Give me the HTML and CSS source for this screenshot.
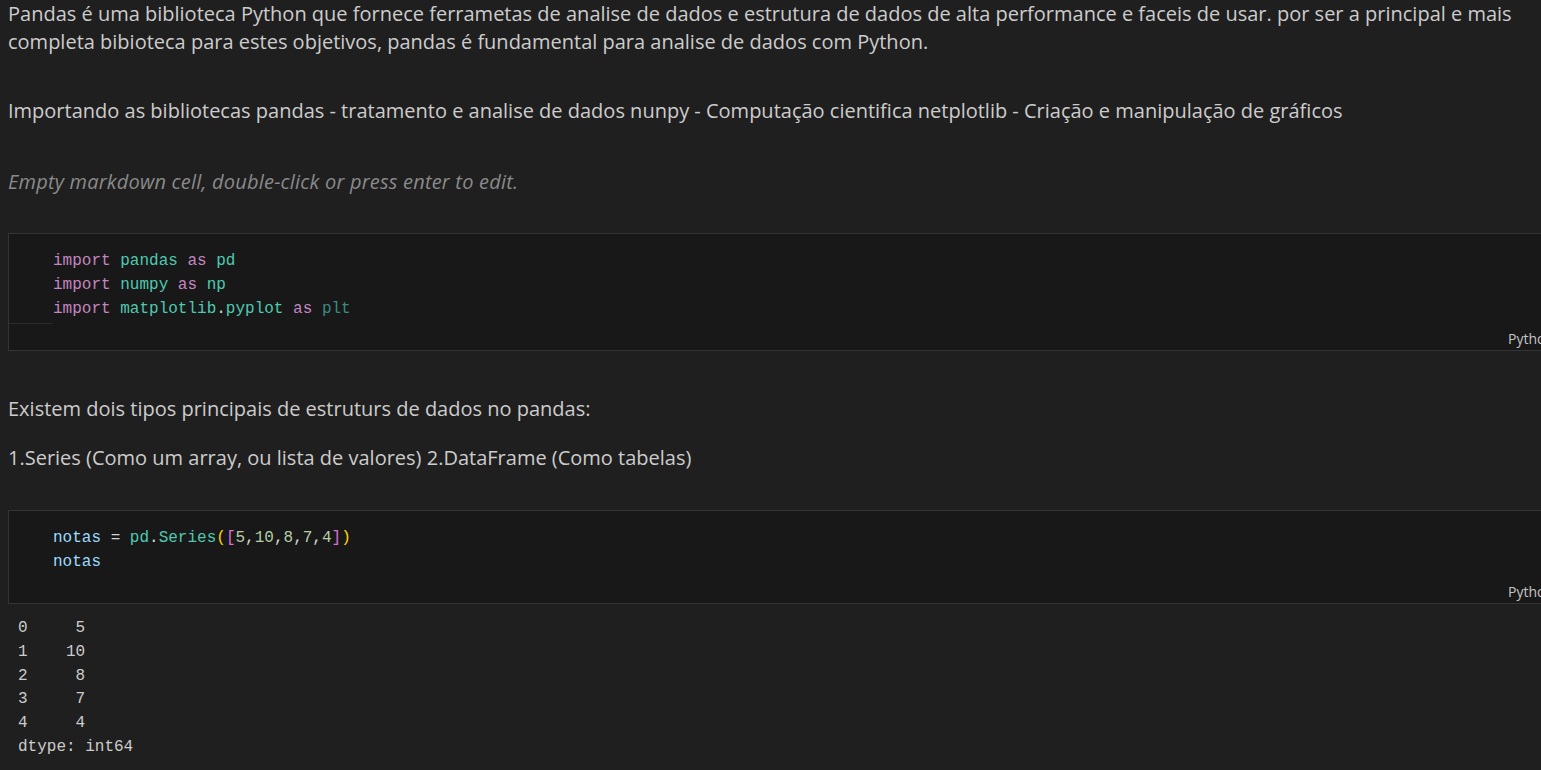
FILE: index.html
```html
<!DOCTYPE html>
<html lang="pt">
<head>
<meta charset="utf-8">
<title>Notebook</title>
<link rel="stylesheet" href="styles.css">
</head>
<body>
<main class="notebook">
  <section class="md md-first">
    <p>Pandas é uma biblioteca Python que fornece ferrametas de analise de dados e estrutura de dados de alta performance e faceis de usar. por ser a principal e mais completa bibioteca para estes objetivos, pandas é fundamental para analise de dados com Python.</p>
  </section>
  <section class="md md-import">
    <p>Importando as bibliotecas pandas - tratamento e analise de dados nunpy - Computação cientifica netplotlib - Criação e manipulação de gráficos</p>
  </section>
  <section class="md md-empty">
    <p class="placeholder">Empty markdown cell, double-click or press enter to edit.</p>
  </section>

  <section class="code-cell cell-imports">
    <div class="editor">
      <div class="gutter gutter-mark"></div>
      <pre class="code"><span class="kw">import</span> <span class="mod">pandas</span> <span class="kw">as</span> <span class="mod">pd</span>
<span class="kw">import</span> <span class="mod">numpy</span> <span class="kw">as</span> <span class="mod">np</span>
<span class="kw">import</span> <span class="mod">matplotlib</span><span class="op">.</span><span class="mod">pyplot</span> <span class="kw">as</span> <span class="unused">plt</span></pre>
    </div>
    <div class="status"><span class="lang">Python</span></div>
  </section>

  <section class="md md-exist">
    <p>Existem dois tipos principais de estruturs de dados no pandas:</p>
  </section>
  <section class="md md-series">
    <p>1.Series (Como um array, ou lista de valores) 2.DataFrame (Como tabelas)</p>
  </section>

  <section class="code-cell cell-series">
    <div class="editor">
      <div class="gutter"></div>
      <pre class="code"><span class="var">notas</span> <span class="op">=</span> <span class="mod">pd</span><span class="op">.</span><span class="mod">Series</span><span class="b1">(</span><span class="b2">[</span><span class="num">5</span><span class="op">,</span><span class="num">10</span><span class="op">,</span><span class="num">8</span><span class="op">,</span><span class="num">7</span><span class="op">,</span><span class="num">4</span><span class="b2">]</span><span class="b1">)</span>
<span class="var">notas</span></pre>
    </div>
    <div class="status"><span class="lang">Python</span></div>
  </section>

  <section class="output">
    <pre>0     5
1    10
2     8
3     7
4     4
dtype: int64</pre>
  </section>
</main>
</body>
</html>
```

FILE: styles.css
```css
html, body {
  margin: 0;
  padding: 0;
  background: #1f1f1f;
  overflow: hidden;
}

.notebook {
  display: flex;
  flex-direction: column;
  width: 1541px;
}

.md {
  padding: 0 8px;
  font-family: "Open Sans", "Noto Sans", sans-serif;
  font-size: 20px;
  line-height: 28px;
  color: #cccccc;
}

.md p {
  margin: 0;
}

.md-first p {
  width: 1522px;
}

.md-import { margin-top: 41px; }
.md-empty { margin-top: 43px; }

.placeholder {
  font-style: italic;
  color: #8a8a8a;
  letter-spacing: 0.2px;
}

.code-cell {
  width: 1580px;
  margin-left: 8px;
  background: #181818;
  border: 1px solid #343434;
  box-sizing: border-box;
  display: flex;
  flex-direction: column;
}

.cell-imports { margin-top: 37px; }
.cell-series { margin-top: 38px; }

.editor {
  display: flex;
  padding-top: 15px;
}

.gutter {
  width: 44px;
  flex: none;
}

.gutter-mark {
  height: 90px;
  box-sizing: border-box;
  border-bottom: 1px solid #2c2c2c;
  margin-top: -15px;
  margin-bottom: -18px;
}

.code {
  margin: 0;
  font-family: "Liberation Mono", "DejaVu Sans Mono", monospace;
  font-size: 16px;
  line-height: 24px;
  color: #d4d4d4;
}

.kw { color: #c586c0; }
.mod { color: #4ec9b0; }
.unused { color: #3a8b7d; }
.var { color: #9cdcfe; }
.op { color: #d4d4d4; }
.num { color: #b5cea8; }
.b1 { color: #ffd700; }
.b2 { color: #da70d6; }

.status {
  height: 29px;
  display: flex;
  justify-content: flex-end;
  align-items: center;
  padding-right: 33px;
  padding-top: 5px;
  box-sizing: border-box;
}

.lang {
  font-family: "Open Sans", "Noto Sans", sans-serif;
  font-size: 14px;
  color: #c4c4c4;
}

.md-exist { margin-top: 44px; }
.md-series { margin-top: 21px; }

.output {
  margin-top: 13px;
  padding-left: 18px;
}

.output pre {
  margin: 0;
  font-family: "Liberation Mono", "DejaVu Sans Mono", monospace;
  font-size: 16px;
  line-height: 23.8px;
  color: #cccccc;
}
```
